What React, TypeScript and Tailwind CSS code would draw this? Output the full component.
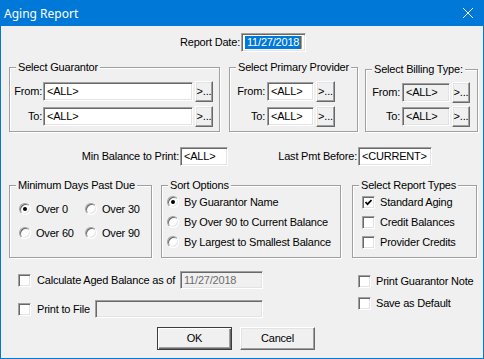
import React from 'react';

// Win classic-looking bits
const sunken =
  'border border-t-[#a0a0a0] border-l-[#a0a0a0] border-b-white border-r-white shadow-[inset_1px_1px_0_#696969,inset_-1px_-1px_0_#e3e3e3]';
const raised =
  'border border-t-white border-l-white border-b-[#696969] border-r-[#696969] shadow-[inset_-1px_-1px_0_#a0a0a0,inset_1px_1px_0_#e3e3e3]';
const etched =
  'border border-[#a0a0a0] shadow-[inset_1px_1px_0_white,1px_1px_0_white]';

const Edit = ({ className, children }: { className: string; children?: React.ReactNode }) => (
  <div className={`h-[19px] shrink-0 flex items-center pl-[3px] whitespace-nowrap overflow-hidden ${sunken} ${className}`}>
    {children}
  </div>
);

const Browse = ({ className }: { className: string }) => (
  <button className={`h-[21px] ml-[2px] flex items-center justify-center pb-[1px] bg-[#f0f0f0] ${raised} ${className}`}>
    &gt;...
  </button>
);

const Radio = ({ checked }: { checked?: boolean }) => (
  <span className={`w-[12px] h-[12px] shrink-0 rounded-full bg-white flex items-center justify-center ${sunken}`}>
    {checked && <span className="w-[4px] h-[4px] rounded-full bg-black" />}
  </span>
);

const Check = ({ checked }: { checked?: boolean }) => (
  <span className={`w-[13px] h-[13px] shrink-0 bg-white flex items-center justify-center ${sunken}`}>
    {checked && (
      <svg width="7" height="7" viewBox="0 0 7 7">
        <polyline points="0.5,3 2.5,5.2 6.5,1" fill="none" stroke="black" strokeWidth="1.7" />
      </svg>
    )}
  </span>
);

const Group = ({ title, className, children }: { title: string; className: string; children: React.ReactNode }) => (
  <fieldset className={`${etched} ${className}`}>
    <legend className="ml-[6px] px-[2px] leading-[14px] bg-[#f0f0f0]">{title}</legend>
    {children}
  </fieldset>
);

const Row = ({ children }: { children: React.ReactNode }) => (
  <div className="flex items-center h-[19px]">{children}</div>
);

export default function App() {
  return (
    <div className="w-[484px] h-[359px] flex flex-col bg-[#f0f0f0] text-[11px] leading-[13px] tracking-[-0.2px] text-black [font-family:'Liberation_Sans',Arial,sans-serif]">
      <div className="h-[26px] shrink-0 bg-[#0078d7] flex items-center justify-between pl-[4px] pr-[11px] text-white tracking-normal">
        <span className="text-[12px] [font-family:'Noto_Sans',sans-serif]">Aging Report</span>
        <svg width="10" height="10" viewBox="0 0 10 10">
          <path d="M0 0L10 10M10 0L0 10" stroke="white" strokeWidth="1" />
        </svg>
      </div>

      <div className="flex-1 flex flex-col border-x border-b border-[#0078d7]">
        {/* report date */}
        <div className="mt-[7px] flex items-center">
          <span className="w-[240px] text-right pr-[1px]">Report Date:</span>
          <Edit className="w-[65px] bg-white pl-[2px]">
            <span className="bg-[#0078d7] text-white px-[2px]">11/27/2018</span>
            <span className="w-[1px] h-[13px] bg-[#ff8c00]" />
          </Edit>
        </div>

        {/* selection groups */}
        <div className="mt-[8px] flex items-start pl-[8px]">
          <Group title="Select Guarantor" className="w-[211px] h-[72px]">
            <div className="mt-[8px] flex flex-col gap-[6px]">
              <Row>
                <span className="w-[33px] text-right pr-[1px]">From:</span>
                <Edit className="w-[150px] bg-white">&lt;ALL&gt;</Edit>
                <Browse className="w-[18px]" />
              </Row>
              <Row>
                <span className="w-[33px] text-right pr-[1px]">To:</span>
                <Edit className="w-[150px] bg-white">&lt;ALL&gt;</Edit>
                <Browse className="w-[18px]" />
              </Row>
            </div>
          </Group>

          <Group title="Select Primary Provider" className="ml-[9px] w-[129px] h-[72px]">
            <div className="mt-[8px] flex flex-col gap-[6px]">
              <Row>
                <span className="w-[37px] text-right pr-[2px]">From:</span>
                <Edit className="w-[47px] bg-white">&lt;ALL&gt;</Edit>
                <Browse className="w-[19px]" />
              </Row>
              <Row>
                <span className="w-[37px] text-right pr-[2px]">To:</span>
                <Edit className="w-[47px] bg-white">&lt;ALL&gt;</Edit>
                <Browse className="w-[19px]" />
              </Row>
            </div>
          </Group>

          <Group title="Select Billing Type:" className="ml-[7px] mt-[2px] w-[113px] h-[70px]">
            <div className="mt-[7px] flex flex-col gap-[5px]">
              <Row>
                <span className="w-[36px] text-right pr-[2px]">From:</span>
                <Edit className="w-[48px] bg-[#f0f0f0]">&lt;ALL&gt;</Edit>
                <Browse className="w-[18px]" />
              </Row>
              <Row>
                <span className="w-[36px] text-right pr-[2px]">To:</span>
                <Edit className="w-[48px] bg-[#f0f0f0]">&lt;ALL&gt;</Edit>
                <Browse className="w-[18px]" />
              </Row>
            </div>
          </Group>
        </div>

        {/* balance / payment */}
        <div className="mt-[15px] flex items-center h-[19px]">
          <span className="w-[179px] text-right pr-[1px]">Min Balance to Print:</span>
          <Edit className="w-[48px] bg-white">&lt;ALL&gt;</Edit>
          <span className="w-[130px] text-right pr-[1px]">Last Pmt Before:</span>
          <Edit className="w-[74px] bg-white">&lt;CURRENT&gt;</Edit>
        </div>

        {/* options */}
        <div className="mt-[12px] flex items-start pl-[8px]">
          <Group title="Minimum Days Past Due" className="w-[139px] h-[80px]">
            <div className="mt-[9px] pl-[9px] grid grid-cols-[66px_66px] gap-y-[8px]">
              {[
                ['Over 0', true],
                ['Over 30', false],
                ['Over 60', false],
                ['Over 90', false],
              ].map(([t, c]) => (
                <label key={t as string} className="flex items-center gap-[5px] h-[16px]">
                  <Radio checked={c as boolean} />
                  <span>{t}</span>
                </label>
              ))}
            </div>
          </Group>

          <Group title="Sort Options" className="ml-[9px] w-[180px] h-[80px]">
            <div className="pl-[5px] flex flex-col">
              {['By Guarantor Name', 'By Over 90 to Current Balance', 'By Largest to Smallest Balance'].map((t, i) => (
                <label key={t} className="flex items-center gap-[5px] h-[20px]">
                  <Radio checked={i === 0} />
                  <span className="whitespace-nowrap">{t}</span>
                </label>
              ))}
            </div>
          </Group>

          <Group title="Select Report Types" className="ml-[11px] w-[125px] h-[80px]">
            <div className="pl-[9px] flex flex-col">
              {['Standard Aging', 'Credit Balances', 'Provider Credits'].map((t, i) => (
                <label key={t} className="flex items-center gap-[5px] h-[20px]">
                  <Check checked={i === 0} />
                  <span className="whitespace-nowrap">{t}</span>
                </label>
              ))}
            </div>
          </Group>
        </div>

        {/* bottom checks */}
        <div className="mt-[13px] flex items-start">
          <div className="w-[262px] shrink-0 pl-[17px] flex flex-col gap-[11px]">
            <div className="h-[18px] flex items-center justify-between">
              <label className="flex items-center gap-[6px] whitespace-nowrap">
                <Check />
                <span>Calculate Aged Balance as of</span>
              </label>
              <Edit className="w-[83px] !h-[18px] bg-[#f0f0f0] text-[#6d6d6d]">11/27/2018</Edit>
            </div>
            <div className="h-[18px] flex items-center justify-between">
              <label className="flex items-center gap-[6px] whitespace-nowrap">
                <Check />
                <span>Print to File</span>
              </label>
              <Edit className="w-[168px] !h-[18px] bg-[#f0f0f0]" />
            </div>
          </div>
          <div className="ml-[95px] mt-[2px] flex flex-col gap-[6px]">
            <label className="h-[16px] flex items-center gap-[5px] whitespace-nowrap">
              <Check />
              <span>Print Guarantor Note</span>
            </label>
            <label className="h-[16px] flex items-center gap-[5px] whitespace-nowrap">
              <Check />
              <span>Save as Default</span>
            </label>
          </div>
        </div>

        {/* buttons */}
        <div className="mt-[9px] flex pl-[156px] gap-[8px]">
          <button className="w-[75px] h-[23px] bg-[#f0f0f0] border border-[#3c3c3c] shadow-[inset_1px_1px_0_white,inset_-1px_-1px_0_#696969,inset_-2px_-2px_0_#a0a0a0]">
            OK
          </button>
          <button className={`w-[75px] h-[23px] bg-[#f0f0f0] ${raised}`}>Cancel</button>
        </div>
      </div>
    </div>
  );
}
